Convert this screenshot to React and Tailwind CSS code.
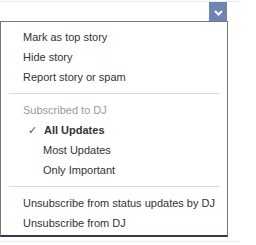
import React from "react";

function Item({ children, indent = false, className = "" }) {
  return (
    <div
      className={`h-[20px] flex items-center whitespace-nowrap ${indent ? "pl-[42px]" : "pl-[22px]"} text-[#333] ${className}`}
    >
      {children}
    </div>
  );
}

export default function App() {
  return (
    <div
      className="w-[256px] h-[245px] bg-white relative overflow-hidden text-[11px]"
      style={{ fontFamily: "'Liberation Sans', Arial, sans-serif" }}
    >
      <div className="h-[2px] w-[240px] border-b border-[#eceef2]"></div>
      <div className="flex h-[19px]">
        <div className="w-[209px]"></div>
        <div className="w-[18px] bg-[#6d84b4] flex items-center justify-center">
          <svg width="9" height="6" viewBox="0 0 9 6" className="mt-[3px]">
            <path d="M1 1 L4.5 4.5 L8 1" fill="none" stroke="white" strokeWidth="2" />
          </svg>
        </div>
      </div>
      <div className="w-[228px] border-t border-x border-[#777] border-b-2 border-b-[#333a4d] pt-[5px] pb-[2px] bg-white">
        <Item>Mark as top story</Item>
        <Item>Hide story</Item>
        <Item>Report story or spam</Item>
        <div className="h-[13px] flex items-center px-[8px]">
          <div className="h-px w-full bg-[#dcdcdc]"></div>
        </div>
        <Item className="!text-[#999]">Subscribed to DJ</Item>
        <div className="h-[20px] flex items-center pl-[27px] text-[#333]">
          <span className="w-[16px] text-[#555]">✓</span>
          <span className="font-bold">All Updates</span>
        </div>
        <Item indent>Most Updates</Item>
        <Item indent>Only Important</Item>
        <div className="h-[13px] flex items-center px-[8px]">
          <div className="h-px w-full bg-[#dcdcdc]"></div>
        </div>
        <Item>Unsubscribe from status updates by DJ</Item>
        <Item>Unsubscribe from DJ</Item>
      </div>
      <div className="mt-[4px] h-px w-[240px] bg-[#eceef2]"></div>
    </div>
  );
}
